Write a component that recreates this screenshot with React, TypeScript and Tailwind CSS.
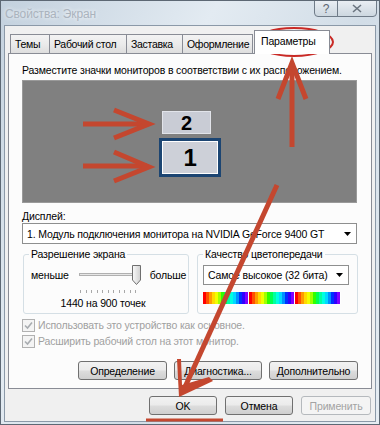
import React from "react";

const spectrum = [
  "#ff0000", "#ff5000", "#ff9a00", "#ffd800", "#f0ff00", "#a0ff00", "#30ff00", "#00ff50",
  "#00ffa0", "#00ffe0", "#00d8ff", "#0090ff", "#0030ff", "#3000ff", "#8000ff", "#ffffff",
];

function Btn({ label, w, disabled }: { label: string; w: string; disabled?: boolean }) {
  return (
    <div
      className={`${w} flex h-[19px] items-center justify-center rounded-[3px] border whitespace-nowrap ${
        disabled
          ? "border-[#b5b9bd] bg-[#f4f4f4] text-[#a3a3a3]"
          : "border-[#707070] bg-[linear-gradient(#f2f2f2,#ebebeb_48%,#dddddd_52%,#cfcfcf)] text-black"
      }`}
    >
      {label}
    </div>
  );
}

function Tab({ label, w, active }: { label: string; w: string; active?: boolean }) {
  if (active)
    return (
      <div
        className={`${w} relative z-10 -mb-px ml-px flex h-[24px] items-start whitespace-nowrap border border-b-0 border-[#898c95] bg-white pl-[6px] pt-[3px] text-black`}
      >
        {label}
      </div>
    );
  return (
    <div
      className={`${w} -ml-px flex h-[19px] items-center whitespace-nowrap border border-b-0 border-[#898c95] bg-[linear-gradient(#f3f3f3,#ebebeb_50%,#dedede)] pl-[4px] tracking-[-0.3px] text-black`}
    >
      {label}
    </div>
  );
}

function Check({ label }: { label: string }) {
  return (
    <div className="flex h-[14px] items-center gap-[3px] text-[#a0a0a0]">
      <div className="flex h-[13px] w-[13px] items-center justify-center border border-[#b1b1b1] bg-[#f4f4f4]">
        <svg width="9" height="9" viewBox="0 0 9 9">
          <path d="M1 4.5 L3.5 7 L8 1.5" fill="none" stroke="#a8acb0" strokeWidth="1.6" />
        </svg>
      </div>
      <span>{label}</span>
    </div>
  );
}

function Arrow() {
  return (
    <svg width="7" height="4" viewBox="0 0 7 4">
      <path d="M0 0 H7 L3.5 4 Z" fill="#000" />
    </svg>
  );
}

export default function App() {
  return (
    <div className="relative h-[425px] w-[380px] overflow-hidden border border-[#5d6874] bg-[linear-gradient(120deg,#c3d1de,#e3ebf2_35%,#d2dde7_60%,#e6edf3)] font-['Liberation_Sans',sans-serif] text-[10.5px] leading-[14px] tracking-[-0.15px]">
      {/* title bar */}
      <div className="flex h-[24px] items-start">
        <div className="pl-[4px] pt-[6px] text-[12px] text-[#aab3bd] [text-shadow:0_0_4px_#ffffff]">
          Свойства: Экран
        </div>
        <div className="ml-auto mr-[2px] flex -mt-px">
          <div className="flex h-[17px] w-[24px] items-center justify-center rounded-bl-[4px] border border-[#6f7b88] bg-[linear-gradient(#e9eef3,#cdd7e0)] text-[12px] text-[#5c6672]">
            ?
          </div>
          <div className="-ml-px flex h-[17px] w-[40px] items-center justify-center rounded-br-[4px] border border-[#6f7b88] bg-[linear-gradient(#e9eef3,#cdd7e0)]">
            <svg width="10" height="9" viewBox="0 0 10 9">
              <path d="M1 1 L9 8 M9 1 L1 8" stroke="#6b7580" strokeWidth="1.6" />
            </svg>
          </div>
        </div>
      </div>

      {/* client area */}
      <div className="mx-[3px] h-[397px] border border-[#8b99a8] bg-[#f0f0f0]">
        <div className="flex h-[27px] items-end pl-[6px]">
          <Tab label="Темы" w="w-[40px]" />
          <Tab label="Рабочий стол" w="w-[78px]" />
          <Tab label="Заставка" w="w-[57px]" />
          <Tab label="Оформление" w="w-[71px]" />
          <Tab label="Параметры" w="w-[76px]" active />
        </div>

        <div className="ml-[3px] flex h-[336px] w-[364px] flex-col border border-[#898c95] bg-[#fcfcfc] px-[13px]">
          <div className="mt-[9px] h-[14px] whitespace-nowrap">
            Разместите значки мониторов в соответствии с их расположением.
          </div>

          <div className="relative mt-[3px] h-[123px] w-[335px] border border-[#9a9a9a] bg-[#808080]">
            <div className="absolute left-[139px] top-[30px] flex h-[23px] w-[49px] items-center justify-center border border-[#e2e4ea] bg-[#c9ccd5] text-[20px] font-bold">
              2
            </div>
            <div className="absolute left-[136px] top-[57px] h-[39px] w-[62px] border-[3px] border-[#1c4572]">
              <div className="flex h-full w-full items-center justify-center border border-white bg-[#cdd0d8] text-[24px] font-bold">
                1
              </div>
            </div>
          </div>

          <div className="mt-[6px] h-[14px]">Дисплей:</div>
          <div className="flex h-[21px] w-[335px] items-center whitespace-nowrap border border-[#8e8f8f] bg-white pl-[4px] pr-[5px]">
            <span>1. Модуль подключения монитора на NVIDIA GeForce 9400 GT</span>
            <span className="ml-auto">
              <Arrow />
            </span>
          </div>

          <div className="mt-[10px] flex gap-[8px] pl-px">
            <div className="relative h-[60px] w-[166px] rounded-[3px] border border-[#d5dfe5]">
              <span className="absolute -top-[8px] left-[5px] whitespace-nowrap bg-[#fcfcfc] px-[2px]">Разрешение экрана</span>
              <div className="mt-[10px] flex items-center pl-[7px]">
                <span>меньше</span>
                <div className="relative ml-[10px] h-[20px] w-[62px]">
                  <div className="absolute left-0 top-[8px] h-[3px] w-[58px] border border-[#b0b0b0] bg-[#e6e6e6]" />
                  <svg className="absolute left-[53px] top-0" width="9" height="20" viewBox="0 0 9 20">
                    <defs>
                      <linearGradient id="th" x1="0" x2="1">
                        <stop offset="0" stopColor="#fafafa" />
                        <stop offset="1" stopColor="#d0d0d0" />
                      </linearGradient>
                    </defs>
                    <path d="M0.5 0.5 H8.5 V15 L4.5 19.5 L0.5 15 Z" fill="url(#th)" stroke="#6f6f6f" />
                  </svg>
                </div>
                <span className="ml-[9px]">больше</span>
              </div>
              <div className="ml-[56px] mt-[5px] flex w-[56px] justify-between">
                {Array.from({ length: 11 }).map((_, i) => (
                  <div key={i} className="h-[3px] w-px bg-[#a8a8a8]" />
                ))}
              </div>
              <div className="mt-[3px] pr-[6px] text-center">1440 на 900 точек</div>
            </div>

            <div className="relative h-[60px] w-[161px] rounded-[3px] border border-[#d5dfe5]">
              <span className="absolute -top-[8px] left-[5px] whitespace-nowrap bg-[#fcfcfc] px-[2px]">Качество цветопередачи</span>
              <div className="ml-[5px] mt-[10px] flex h-[20px] w-[146px] items-center whitespace-nowrap border border-[#8e8f8f] bg-white pl-[4px] pr-[5px]">
                <span>Самое высокое (32 бита)</span>
                <span className="ml-auto">
                  <Arrow />
                </span>
              </div>
              <div className="ml-[5px] mt-[7px] flex h-[12px] w-[146px] overflow-hidden">
                {[0, 1, 2].map((k) =>
                  spectrum.map((c, i) => (
                    <div key={`${k}-${i}`} className={i === 15 ? "h-full w-px" : "h-full w-[3px]"} style={{ background: c }} />
                  ))
                )}
              </div>
            </div>
          </div>

          <div className="mt-[4px]">
            <Check label="Использовать это устройство как основное." />
          </div>
          <div className="mt-[2px]">
            <Check label="Расширить рабочий стол на этот монитор." />
          </div>

          <div className="mt-[13px] flex justify-end gap-[7px]">
            <Btn label="Определение" w="w-[89px]" />
            <Btn label="Диагностика..." w="w-[88px]" />
            <Btn label="Дополнительно" w="w-[89px]" />
          </div>
        </div>

        <div className="mr-[4px] mt-[7px] flex justify-end gap-[8px]">
          <Btn label="OK" w="w-[68px]" />
          <Btn label="Отмена" w="w-[68px]" />
          <Btn label="Применить" w="w-[70px]" disabled />
        </div>
      </div>

      {/* red annotation marks drawn over the dialog */}
      <svg className="pointer-events-none absolute left-0 top-0" width="380" height="425" viewBox="0 0 380 425">
        <ellipse cx="293" cy="41" rx="39" ry="14" fill="none" stroke="#c92a26" strokeWidth="2" />
        <g stroke="#c4472f" strokeWidth="5" strokeLinecap="butt" fill="none">
          <path d="M82 123 H146" />
          <path d="M113 109 L148 123 L113 137" />
          <path d="M82 165 H146" />
          <path d="M113 151 L148 166 L113 180" />
          <path d="M291 146 V66" />
          <path d="M277 98 L291 62 L305 98" />
          <path d="M276 184 L184 386" />
          <path d="M145 419 H222" strokeWidth="3" />
        </g>
        <path d="M176 358 L180 358 L181 384 L208 376 L212 380 L178 396 Z" fill="#c4472f" />
      </svg>
    </div>
  );
}
